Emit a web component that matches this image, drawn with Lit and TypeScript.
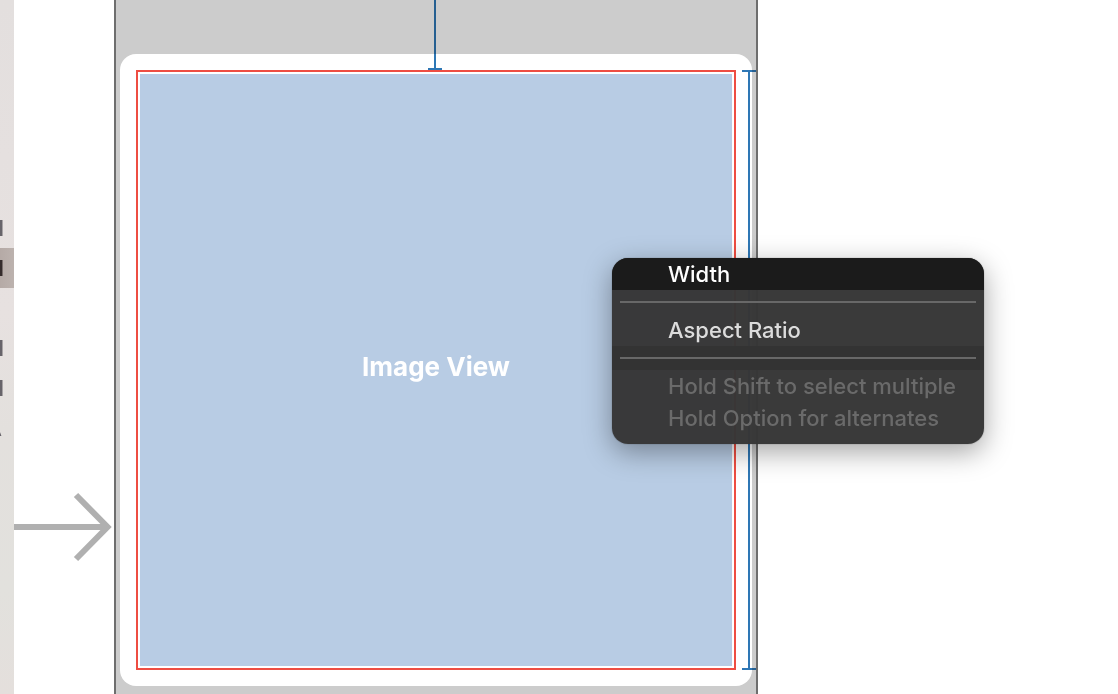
import { LitElement, html, css } from "lit";
import { customElement } from "lit/decorators.js";
import { classMap } from "lit/directives/class-map.js";

interface OutlineRow {
  label: string;
  selected?: boolean;
}

@customElement("outline-sidebar")
class OutlineSidebar extends LitElement {
  static styles = css`
    :host {
      display: block;
      overflow: hidden;
      padding-top: 208px;
      background: linear-gradient(#e3dfde, #e7e1e0 45%, #e3e0dd 62%, #e2e1dd 85%, #e4dfdc);
      font: 700 22px/40px Inter, sans-serif;
      color: #67646a;
    }
    .rows {
      list-style: none;
      margin: 0;
      padding: 0;
    }
    .row {
      display: flex;
      justify-content: flex-end;
      box-sizing: border-box;
      height: 40px;
      padding-right: 10px;
    }
    .row:last-child {
      padding-right: 12px;
    }
    .selected {
      background: linear-gradient(90deg, #b5aaa6, #bcb2ae);
      color: #352c2c;
    }
  `;

  private rows: OutlineRow[] = [
    { label: "I" },
    { label: "I", selected: true },
    { label: "" },
    { label: "I" },
    { label: "I" },
    { label: "A" },
  ];

  render() {
    return html`<ul class="rows">
      ${this.rows.map(
        (r) => html`<li class=${classMap({ row: true, selected: !!r.selected })}>${r.label}</li>`
      )}
    </ul>`;
  }
}

@customElement("constraint-menu")
class ConstraintMenu extends LitElement {
  static styles = css`
    :host {
      display: block;
      box-sizing: border-box;
      padding-bottom: 10px;
      overflow: hidden;
      border-radius: 16px;
      background: rgba(54, 54, 54, 0.98);
      box-shadow: 0 0 1px rgba(0, 0, 0, 0.6), 0 8px 28px rgba(0, 0, 0, 0.36);
    }
    .item {
      display: block;
      width: 100%;
      height: 32px;
      margin: 0;
      padding: 0 0 0 56px;
      border: 0;
      background: none;
      color: #dcdcdc;
      font: 500 22px/32px Inter, sans-serif;
      text-align: left;
      white-space: nowrap;
    }
    .active {
      background: #1b1b1b;
      color: #fff;
    }
    .item:disabled {
      color: #6a6a6a;
    }
    .divider {
      display: flex;
      align-items: center;
      height: 24px;
      padding: 0 8px;
    }
    .shaded {
      background: #333;
    }
    .rule {
      flex: 1;
      height: 2px;
      margin: 0;
      border: 0;
      background: #686868;
    }
  `;

  render() {
    return html`
      <button class="item active" role="menuitem">Width</button>
      <div class="divider"><hr class="rule" /></div>
      <button class="item" role="menuitem">Aspect Ratio</button>
      <div class="divider shaded"><hr class="rule" /></div>
      <button class="item" role="menuitem" disabled>Hold Shift to select multiple</button>
      <button class="item" role="menuitem" disabled>Hold Option for alternates</button>
    `;
  }
}

@customElement("app-root")
class AppRoot extends LitElement {
  static styles = css`
    :host {
      display: grid;
      grid-template-columns: 14px 100px minmax(0, 644px) 1fr;
      min-height: 100vh;
      position: relative;
      overflow: hidden;
      background: #fff;
      font-family: Inter, sans-serif;
    }
    .entry {
      padding-top: 490px;
    }
    .arrow {
      display: block;
      width: 100%;
      height: 74px;
    }
    .scene {
      position: relative;
      box-sizing: border-box;
      padding: 54px 4px 8px;
      border: solid #6e6e6e;
      border-width: 0 2px;
      background: #ccc;
    }
    .cell {
      position: relative;
      box-sizing: border-box;
      aspect-ratio: 1;
      padding: 16px;
      border-radius: 16px;
      background: #fff;
    }
    .outline {
      box-sizing: border-box;
      height: 100%;
      padding: 2px;
      border: 2px solid #ee4d42;
    }
    .image-view {
      display: grid;
      place-items: center;
      box-sizing: border-box;
      height: 100%;
      padding-bottom: 6px;
      background: #b8cce4;
      color: #fff;
      font-size: 26px;
      line-height: 32px;
      font-weight: 700;
    }
    .constraint {
      position: absolute;
      box-sizing: border-box;
      width: 14px;
      mix-blend-mode: multiply;
      border: solid #2e77b5;
      background: linear-gradient(#2e77b5, #2e77b5) center / 2px 100% no-repeat;
    }
    .top {
      top: 0;
      left: calc(50% - 8px);
      height: 70px;
      border-width: 0 0 2px;
    }
    .height {
      top: 16px;
      bottom: 16px;
      right: -4px;
      border-width: 2px 0;
    }
    .menu {
      position: absolute;
      left: 612px;
      top: 258px;
      width: 372px;
    }
  `;

  render() {
    return html`
      <outline-sidebar></outline-sidebar>
      <div class="entry">
        <svg class="arrow" viewBox="0 0 100 74" fill="none" stroke="#b0b0b0" stroke-width="6" aria-hidden="true">
          <path d="M0 37H92M62 5L93.5 37L62 69" />
        </svg>
      </div>
      <main class="scene">
        <div class="cell">
          <div class="outline"><div class="image-view">Image View</div></div>
          <div class="constraint height"></div>
        </div>
        <div class="constraint top"></div>
      </main>
      <constraint-menu class="menu" role="menu"></constraint-menu>
    `;
  }
}
